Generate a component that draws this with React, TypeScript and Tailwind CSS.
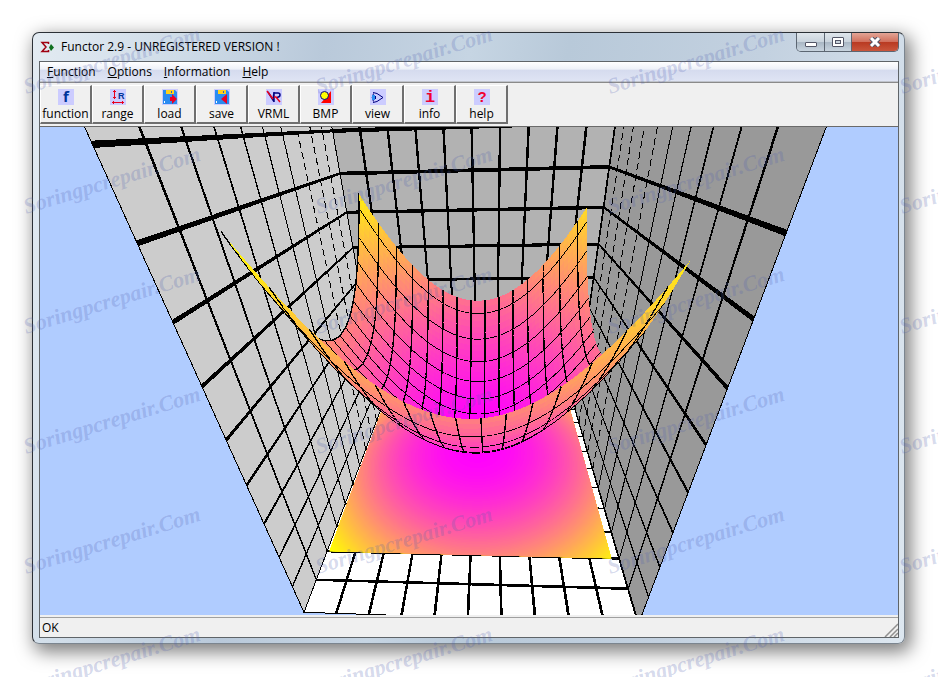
import React from "react";

type P3 = [number, number, number];
type P2 = [number, number];

// Perspective camera: maps the 10 x 10 x 10 room to the drawing's coordinates.
const CAM = [0.39447, 0.0169, -0.01328, -0.00161, 0.00042, -0.21246, -0.46492, -0.09332, -0.02022, 0.34273, -0.28587];

function project([x, y, z]: P3): P2 {
  const X = (x - 5) / 5;
  const Y = (y - 5) / 5;
  const Z = (z - 5) / 5;
  const w = CAM[8] * X + CAM[9] * Y + CAM[10] * Z + 1;
  return [
    430 + (400 * (CAM[0] * X + CAM[1] * Y + CAM[2] * Z + CAM[3])) / w,
    243 + (400 * (CAM[4] * X + CAM[5] * Y + CAM[6] * Z + CAM[7])) / w,
  ];
}
const pts = (ps: P3[]) =>
  ps
    .map((p) => project(p).map((n) => n.toFixed(1)).join(","))
    .join(" ");

const LINES = Array.from({ length: 11 }, (_, i) => i);

function GridLine({ at, i, half, dashed }: { at: (i: number, t: number) => P3; i: number; half: number; dashed: boolean }) {
  return (
    <g>
      {!dashed && i > 0 && <polygon points={pts([at(i - half, 0), at(i + half, 0), at(i + half, 10), at(i - half, 10)])} />}
      <polyline points={pts([at(i, 0), at(i, 10)])} fill="none" stroke="#000" strokeDasharray={dashed ? "7 4" : undefined} />
    </g>
  );
}

function Wall({ at, fill, half, dashFrom = 99 }: { at: (a: number, b: number) => P3; fill: string; half: number; dashFrom?: number }) {
  return (
    <g>
      <polygon points={pts([at(0, 0), at(10, 0), at(10, 10), at(0, 10)])} fill={fill} stroke="#000" />
      {LINES.map((i) => (
        <GridLine key={"a" + i} i={i} half={half} at={at} dashed={i >= dashFrom && i < 10} />
      ))}
      {LINES.map((i) => (
        <GridLine key={"b" + i} i={i} half={half} at={(p, t) => at(t, p)} dashed={false} />
      ))}
    </g>
  );
}

// The paraboloid and its domain.
const BASE = 0.77;
const AMP = 7;
const CX = 5.1;
const CY = 7;
const X0 = 0.08;
const Y0 = 2;
const SIZE = 9.65;
const SUB = 4;
const STEP = 10 / 15 / SUB;
const level = (x: number, y: number) => ((x - CX) ** 2 + (y - CY) ** 2) / 50;
const surf = (x: number, y: number): P3 => [x, y, BASE + AMP * level(x, y)];
const shade = (v: number) => Math.max(0, Math.min(255, Math.round(255 * v)));
const colour = (t: number) => `rgb(255,${shade(t)},${shade(1 - t)})`;
const CUTS = Array.from({ length: Math.ceil(SIZE / STEP) }, (_, i) => i * STEP).concat(SIZE);
const N = CUTS.length - 1;
const OUTSIDE_IN = Array.from({ length: N }, (_, i) => i).sort((a, b) => Math.abs(b - N / 2) - Math.abs(a - N / 2));
const RINGS = Array.from({ length: 92 }, (_, i) => (92 - i) / 90);
const TURN = Array.from({ length: 72 }, (_, i) => (i * Math.PI) / 36);

function Shadow() {
  return (
    <g clipPath="url(#domain)">
      <clipPath id="domain">
        <polygon points={pts([[X0, Y0, 0], [X0 + SIZE, Y0, 0], [X0 + SIZE, Y0 + SIZE, 0], [X0, Y0 + SIZE, 0]])} />
      </clipPath>
      {RINGS.map((t) => {
        const r = Math.sqrt(50 * t);
        return <polygon key={t} points={pts(TURN.map((a): P3 => [CX + r * Math.cos(a), CY + r * Math.sin(a), 0]))} fill={colour(t)} />;
      })}
    </g>
  );
}

function Bowl() {
  const out: React.ReactNode[] = [];
  for (let j = N - 1; j >= 0; j--) {
    const near = CUTS[j] + Y0;
    const far = CUTS[j + 1] + Y0;
    for (const i of OUTSIDE_IN) {
      const a = CUTS[i] + X0;
      const b = CUTS[i + 1] + X0;
      out.push(
        <polygon
          key={"c" + i + "_" + j}
          points={pts([surf(a, near), surf(b, near), surf(b, far), surf(a, far)])}
          fill={colour(level((a + b) / 2, (near + far) / 2))}
        />,
      );
    }
    for (let i = 0; i < N; i += SUB) {
      out.push(<polyline key={"v" + i + "_" + j} points={pts([surf(CUTS[i] + X0, far), surf(CUTS[i] + X0, near)])} fill="none" stroke="#000" strokeWidth="1.4" />);
    }
    if (j % SUB === 0 && j > 0) {
      out.push(<polyline key={"h" + j} points={pts(CUTS.map((x) => surf(x + X0, near)))} fill="none" stroke="#000" strokeWidth="1.6" />);
    }
  }
  return <g>{out}</g>;
}

function Plot() {
  return (
    <svg
      viewBox="0 0 858 488"
      preserveAspectRatio="xMidYMid slice"
      className="block min-h-0 w-full flex-1 bg-[#b0ccff]"
      shapeRendering="crispEdges"
      role="img"
      aria-label="Surface plot"
    >
      <Wall at={(a, b) => [a, b, 0]} fill="#fff" half={0.042} />
      <Wall at={(a, b) => [a, 10, b]} fill="#b2b2b2" half={0.045} />
      <Shadow />
      <Wall at={(a, b) => [0, a, b]} fill="#ccc" half={0.032} dashFrom={7} />
      <Wall at={(a, b) => [10, a, b]} fill="#999" half={0.032} dashFrom={6} />
      <Bowl />
    </svg>
  );
}

const disk = (
  <g>
    <path d="M1 1h12l2 2v12H1z" fill="#2a8cf0" />
    <path d="M4 1h8v4H4z" fill="#ffd21c" />
    <path d="M9 2h1v2H9z" fill="#2a5cc0" />
    <path d="M2 12h1v2H2z" fill="#fff" />
  </g>
);

const TOOLS: { label: string; icon: React.ReactNode }[] = [
  {
    label: "function",
    icon: <text x="8" y="13" textAnchor="middle" fontSize="15" fill="#003399" className="font-['Open_Sans'] font-bold">f</text>,
  },
  {
    label: "range",
    icon: (
      <g>
        <path d="M4 1h1v9H4zM3 2h3v1H3zM3 8h3v1H3zM2 13h12v1H2zM3 12h1v3H3zM12 12h1v3h-1z" fill="#e8001c" />
        <text x="8" y="10" fontSize="9" fill="#003399" className="font-['Liberation_Sans'] font-bold">R</text>
      </g>
    ),
  },
  { label: "load", icon: <g>{disk}<path d="M8 8h2V5l5 5-5 5v-3H8z" fill="#e80028" /></g> },
  { label: "save", icon: <g>{disk}<path d="M13 5v10L7 10z" fill="#e80028" /></g> },
  {
    label: "VRML",
    icon: (
      <g fill="none" strokeWidth="1.5">
        <path d="M2 3l5 8 1-8M8 13V4h4q2 0 2 2t-3 2.500" stroke="#000080" />
        <path d="M1 2l6 8M8 8h2l4 5" stroke="#e8001c" />
      </g>
    ),
  },
  {
    label: "BMP",
    icon: (
      <g>
        <path d="M13 2v12H3z" fill="#ff0000" />
        <circle cx="6.500" cy="6.500" r="4" fill="#ffff00" stroke="#000080" />
      </g>
    ),
  },
  {
    label: "view",
    icon: (
      <g fill="none" stroke="#000080">
        <path d="M3 3.500l4 1 6 4-6 4-4 1M3.500 4.500Q1 8.500 3.500 12.500" />
        <path d="M2 6h3v5H2z" fill="#2a8cf0" stroke="none" />
        <path d="M5 7h1v3H5z" fill="#000080" stroke="none" />
      </g>
    ),
  },
  {
    label: "info",
    icon: <text x="8" y="13" textAnchor="middle" fontSize="17" fill="#f00030" className="font-['Liberation_Mono'] font-bold">i</text>,
  },
  {
    label: "help",
    icon: <text x="8" y="13" textAnchor="middle" fontSize="15" fill="#f00030" className="font-['Liberation_Sans'] font-bold">?</text>,
  },
];

function Watermarks() {
  const marks: P2[] = [];
  for (let c = 0; c < 4; c++) for (let r = 0; r < 6; r++) marks.push([26 + 292 * c, 94 + 120 * r]);
  return (
    <svg aria-hidden="true" className="pointer-events-none absolute inset-0 h-full w-full">
      {marks.map(([x, y]) => (
        <text
          key={x + "_" + y}
          x={x}
          y={y}
          transform={`rotate(-17 ${x} ${y})`}
          fontSize="22"
          fill="#5060b0"
          fillOpacity="0.24"
          className="font-['Liberation_Serif',serif] font-bold italic"
        >
          Soringpcrepair.Com
        </text>
      ))}
    </svg>
  );
}

export default function App() {
  return (
    <div className="relative flex h-screen overflow-hidden bg-white pt-8 pr-[33px] pb-[33px] pl-8 font-['Open_Sans','Noto_Sans',sans-serif] text-xs text-black">
      <main className="flex min-w-0 flex-1 flex-col rounded-[7px] border border-[#2b3036] border-r-[#7b858f] border-b-[#7b858f] bg-[linear-gradient(100deg,#e3ebf2_0%,#cfdce8_15%,#b9c9da_30%,#c6d5e3_45%,#b8c9d9_55%,#c3d1e0_75%,#dde7f0_100%)] pr-[5px] pb-[5px] pl-[6px] shadow-[4px_6px_18px_2px_rgba(0,0,0,0.5)]">
        <header className="flex h-7 shrink-0 items-start">
          <svg viewBox="0 0 16 16" className="mt-[6px] ml-px size-4" aria-hidden="true">
            <path d="M8.500 5V3.500H2L6 8l-4 4.500h6.500V11" fill="none" stroke="#a00010" strokeWidth="1.500" />
            <path d="M11 5l3 3.500-3 3.500-2-3.500z" fill="#107020" />
          </svg>
          <h1 className="mt-[5px] ml-[5px] flex-1 leading-[18px]">Functor 2.9 - UNREGISTERED VERSION !</h1>
          <div className="flex h-[19px] overflow-hidden rounded-b-[5px] border border-t-0 border-[#5c6672]">
            <button aria-label="Minimize" className="flex w-7 items-center justify-center border-r border-[#5c6672] bg-[linear-gradient(#dfe6ec_0%,#c9d3dc_50%,#a9b7c4_51%,#c8d4df_100%)]">
              <span className="mt-1 h-[5px] w-3 rounded-[1px] border border-[#535666] bg-white" />
            </button>
            <button aria-label="Maximize" className="flex w-[27px] items-center justify-center border-r border-[#5c6672] bg-[linear-gradient(#dfe6ec_0%,#c9d3dc_50%,#a9b7c4_51%,#c8d4df_100%)]">
              <span className="flex h-[10px] w-3 items-center justify-center rounded-[1px] border border-[#535666] bg-white">
                <span className="h-1 w-[6px] border border-[#535666] bg-[#c9d3dc]" />
              </span>
            </button>
            <button aria-label="Close" className="flex w-[46px] items-center justify-center bg-[linear-gradient(#e3a596_0%,#d1705d_48%,#b93a22_52%,#c9563c_100%)]">
              <svg viewBox="0 0 12 10" className="h-[10px] w-3" aria-hidden="true">
                <path d="M2 1l8 8M10 1L2 9" stroke="#535666" strokeWidth="5" />
                <path d="M2 1l8 8M10 1L2 9" stroke="#fff" strokeWidth="3" />
              </svg>
            </button>
          </div>
        </header>
        <div className="flex min-h-0 flex-1 flex-col border border-[#5f6468] bg-[#f0f0f0]">
          <nav className="flex h-5 shrink-0 items-center gap-3 border-b border-[#c0c4cc] bg-[linear-gradient(#fff_0%,#eef1f8_38%,#d5dbee_42%,#dfe4f4_100%)] px-[7px]">
            {["Function", "Options", "Information", "Help"].map((m) => (
              <button key={m} className="leading-4">
                <span className="underline">{m[0]}</span>
                {m.slice(1)}
              </button>
            ))}
          </nav>
          <div className="flex h-[45px] shrink-0 items-start border-t border-b border-t-[#8a8a8a] border-b-[#6a6a6a] bg-[#f0f0f0] pt-[2px]">
            {TOOLS.map((t) => (
              <button key={t.label} className="flex h-[39px] w-[52px] flex-col items-center border border-r-2 border-b-2 border-t-white border-r-[#6f6f6f] border-b-[#6f6f6f] border-l-white pt-[3px]">
                <svg viewBox="0 0 16 16" className="size-4 bg-[#ccccff]" aria-hidden="true">
                  {t.icon}
                </svg>
                <span className="mt-px leading-4">{t.label}</span>
              </button>
            ))}
          </div>
          <Plot />
          <footer className="mt-[2px] flex h-5 shrink-0 items-center justify-between border-t border-[#a0a0a0] pl-[2px]">
            <span>OK</span>
            <svg viewBox="0 0 14 14" className="size-[14px] self-end" aria-hidden="true">
              <path d="M1 14L14 1M6 14l8-8M10 14l4-4" stroke="#909090" strokeWidth="1.500" />
            </svg>
          </footer>
        </div>
      </main>
      <Watermarks />
    </div>
  );
}
